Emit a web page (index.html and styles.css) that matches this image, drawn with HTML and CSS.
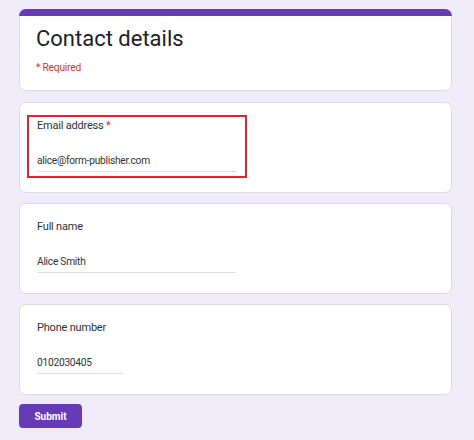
FILE: index.html
```html
<!DOCTYPE html>
<html lang="en">
<head>
<meta charset="utf-8">
<title>Contact details</title>
<link rel="stylesheet" href="styles.css">
</head>
<body>
<main class="form">
  <section class="card card-head">
    <div class="bar"></div>
    <div class="head-body">
      <h1 class="title">Contact details</h1>
      <p class="required">* Required</p>
    </div>
  </section>
  <section class="card">
    <div class="field field-error">
      <div class="label">Email address <span class="star">*</span></div>
      <div class="value value-wide">alice@form-publisher.com</div>
    </div>
  </section>
  <section class="card">
    <div class="field">
      <div class="label">Full name</div>
      <div class="value value-wide">Alice Smith</div>
    </div>
  </section>
  <section class="card">
    <div class="field">
      <div class="label">Phone number</div>
      <div class="value value-short">0102030405</div>
    </div>
  </section>
  <div class="actions">
    <button class="submit" type="button">Submit</button>
  </div>
</main>
</body>
</html>
```
FILE: styles.css
```css
* { box-sizing: border-box; }

html, body {
  margin: 0;
  padding: 0;
  background: #f0ebf8;
  font-family: Roboto, "Liberation Sans", Arial, sans-serif;
  color: #202124;
}

.form {
  width: 433px;
  margin-left: 19px;
  padding-top: 9px;
  display: flex;
  flex-direction: column;
  gap: 10px;
}

.card {
  background: #ffffff;
  border: 1px solid #dadce0;
  border-radius: 7px;
  padding: 0 0 14px 7px;
}

.card-head {
  border: 0;
  padding: 0;
  overflow: hidden;
  margin-bottom: 1px;
  box-shadow: inset 0 0 0 1px #dadce0;
}

.bar {
  height: 7px;
  background: #673ab7;
}

.head-body {
  padding: 9px 16px 16px 17px;
}

.title {
  margin: 0;
  font-size: 22px;
  line-height: 28px;
  font-weight: 400;
  color: #202124;
}

.required {
  margin: 8px 0 0;
  font-size: 10.2px;
  line-height: 14px;
  letter-spacing: -0.2px;
  color: #d93025;
}

.field {
  width: 220px;
  margin-top: 12px;
  border: 2px solid transparent;
  padding: 0 0 4px 8px;
}

.field-error {
  border-color: #e0242a;
}

.label {
  font-size: 11px;
  line-height: 16px;
  letter-spacing: -0.2px;
  padding-top: 1px;
  margin-bottom: -1px;
  color: #303134;
}

.star {
  color: #d93025;
}

.value {
  margin-top: 21px;
  font-size: 10.2px;
  line-height: 14px;
  letter-spacing: -0.25px;
  padding-bottom: 3px;
  border-bottom: 1px solid #e0e0e0;
  color: #303134;
}

.value-wide { width: 199px; }
.value-short { width: 86px; }

.actions {
  margin-top: -1px;
}

.submit {
  width: 63px;
  height: 24px;
  border: 0;
  border-radius: 4px;
  background: #673ab7;
  color: #ffffff;
  font-family: Roboto, "Liberation Sans", Arial, sans-serif;
  font-size: 10px;
  font-weight: 700;
  padding: 0;
  cursor: pointer;
}
```
